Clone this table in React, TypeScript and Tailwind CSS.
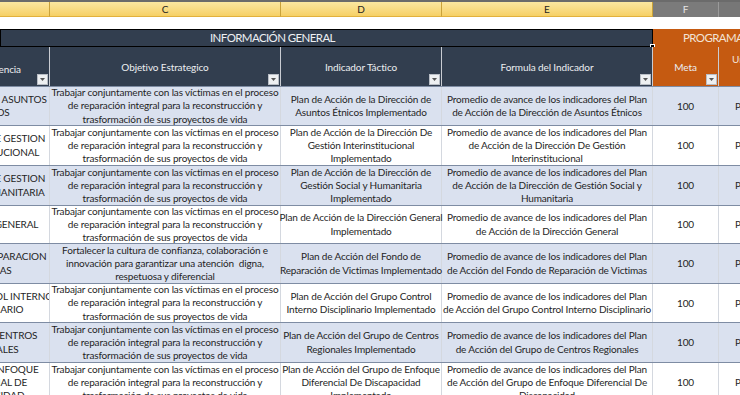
import React from 'react';

type Row = {
    dep: string[];
    obj: string[];
    ind: string[];
    form: string[];
    blue: boolean;
    h: string;
};

const OBJ = [
    'Trabajar conjuntamente con las víctimas en el proceso',
    'de reparación integral para la reconstrucción y',
    'trasformación de sus proyectos de vida',
];
const PROM = 'Promedio de avance de los indicadores del Plan';

const rows: Row[] = [
    {
        dep: ['DIRECCIÓN DE ASUNTOS', 'ÉTNICOS'],
        obj: OBJ,
        ind: ['Plan de Acción de la Dirección de', 'Asuntos Étnicos Implementado'],
        form: [PROM, 'de Acción de la Dirección de Asuntos Étnicos'],
        blue: true,
        h: 'h-[39px]',
    },
    {
        dep: ['DIRECCIÓN DE GESTION', 'INTERINSTITUCIONAL'],
        obj: OBJ,
        ind: ['Plan de Acción de la Dirección De', 'Gestión Interinstitucional', 'Implementado'],
        form: [PROM, 'de Acción de la Dirección De Gestión', 'Interinstitucional'],
        blue: false,
        h: 'h-[40px]',
    },
    {
        dep: ['DIRECCIÓN DE GESTION', 'SOCIAL Y HUMANITARIA'],
        obj: OBJ,
        ind: ['Plan de Acción de la Dirección de', 'Gestión Social y Humanitaria', 'Implementado'],
        form: [PROM, 'de Acción de la Dirección de Gestión Social y', 'Humanitaria'],
        blue: true,
        h: 'h-[40px]',
    },
    {
        dep: ['DIRECCIÓN GENERAL'],
        obj: OBJ,
        ind: ['Plan de Acción de la Dirección General', 'Implementado'],
        form: [PROM, 'de Acción de la Dirección General'],
        blue: false,
        h: 'h-[38px]',
    },
    {
        dep: ['FONDO DE REPARACION', 'VICTIMAS'],
        obj: [
            'Fortalecer la cultura de confianza, colaboración e',
            'innovación para garantizar una atención\u00a0 digna,',
            'respetuosa y diferencial',
        ],
        ind: ['Plan de Acción del Fondo de', 'Reparación de Victimas Implementado'],
        form: [PROM, 'de Acción del Fondo de Reparación de Victimas'],
        blue: true,
        h: 'h-[40px]',
    },
    {
        dep: ['GRUPO CONTROL INTERNO', 'DISCIPLINARIO'],
        obj: OBJ,
        ind: ['Plan de Acción del Grupo Control', 'Interno Disciplinario Implementado'],
        form: [PROM, 'de Acción del Grupo Control Interno Disciplinario'],
        blue: false,
        h: 'h-[39px]',
    },
    {
        dep: ['GRUPO DE CENTROS', 'REGIONALES'],
        obj: OBJ,
        ind: ['Plan de Acción del Grupo de Centros', 'Regionales Implementado'],
        form: [PROM, 'de Acción del Grupo de Centros Regionales'],
        blue: true,
        h: 'h-[40px]',
    },
    {
        dep: ['GRUPO DE ENFOQUE', 'DIFERENCIAL DE', 'DISCAPACIDAD'],
        obj: OBJ,
        ind: ['Plan de Acción del Grupo de Enfoque', 'Diferencial De Discapacidad', 'Implementado'],
        form: [PROM, 'de Acción del Grupo de Enfoque Diferencial De', 'Discapacidad'],
        blue: false,
        h: 'h-[40px]',
    },
];

const Lines = ({ lines }: { lines: string[] }) => (
    <div className="flex flex-col items-center leading-[13.3px]">
        {lines.map((l, i) => (
            <span key={i} className="whitespace-pre">
                {l}
            </span>
        ))}
    </div>
);

const Filter = () => (
    <div className="absolute right-[1px] bottom-[1px] w-[11px] h-[11px] bg-[#eef0f2] border border-[#b9bec6] flex items-center justify-center">
        <svg width="5" height="3" viewBox="0 0 5 3">
            <path d="M0 0h5L2.5 3z" fill="#555" />
        </svg>
    </div>
);

const HeadCell = ({ w, label, orange }: { w: string; label: string; orange?: boolean }) => (
    <div
        className={`relative ${w} shrink-0 h-full flex items-center justify-center border-r border-[#c9ccd2] ${
            orange ? 'bg-[#c55a11]' : 'bg-[#323e4f]'
        }`}
    >
        <span className="text-[10px] tracking-[-0.1px] text-[#eceef1] pt-[2px]">{label}</span>
        <Filter />
    </div>
);

export default function App() {
    return (
        <div
            className="w-[740px] h-[395px] overflow-hidden bg-white text-[#1f1f1f]"
            style={{ fontFamily: 'Lato, "Open Sans", sans-serif' }}
        >
            {/* column letters */}
            <div className="h-[17px] border-t-2 border-[#6b6b6b] flex text-[10px]">
                <div className="w-[50px] shrink-0 bg-gradient-to-b from-[#fbe7a0] to-[#f6d064] border-r border-[#c9a23a] border-b border-b-[#e2b13c]" />
                <div className="w-[231px] shrink-0 bg-gradient-to-b from-[#fbe7a0] to-[#f6d064] border-r border-[#c9a23a] border-b border-b-[#e2b13c] flex items-center justify-center">
                    C
                </div>
                <div className="w-[161px] shrink-0 bg-gradient-to-b from-[#fbe7a0] to-[#f6d064] border-r border-[#c9a23a] border-b border-b-[#e2b13c] flex items-center justify-center">
                    D
                </div>
                <div className="w-[211px] shrink-0 bg-gradient-to-b from-[#fbe7a0] to-[#f6d064] border-r border-[#c9a23a] border-b border-b-[#e2b13c] flex items-center justify-center">
                    E
                </div>
                <div className="w-[66px] shrink-0 bg-[#7b7b7b] border-r border-[#9a9a9a] text-[#e4e4e4] flex items-center justify-center">
                    F
                </div>
                <div className="flex-1 bg-[#777777]" />
            </div>

            {/* blank row */}
            <div className="h-[12px]" />

            {/* group header */}
            <div className="h-[18px] flex">
                <div className="relative w-[653px] shrink-0 bg-[#323e4f] border border-black flex items-center text-[11.5px] tracking-[-0.6px] text-[#eef0f3] pl-[209px]">
                    INFORMACIÓN GENERAL
                    <div className="absolute right-[-3px] bottom-[-3px] w-[5px] h-[5px] bg-black border border-white" />
                </div>
                <div className="flex-1 bg-[#c55a11] flex items-center text-[11.5px] tracking-[-0.6px] text-[#f3e3d6] pl-[30px] whitespace-nowrap">
                    PROGRAMACIÓN
                </div>
            </div>

            {/* column header */}
            <div className="h-[39px] flex">
                <div className="relative w-[50px] shrink-0 h-full bg-[#323e4f] border-r border-[#c9ccd2] overflow-hidden">
                    <span className="absolute right-[28px] top-[15px] text-[10px] tracking-[-0.1px] text-[#eceef1] whitespace-nowrap">
                        Dependencia
                    </span>
                    <Filter />
                </div>
                <HeadCell w="w-[231px]" label="Objetivo Estrategico" />
                <HeadCell w="w-[161px]" label="Indicador Táctico" />
                <HeadCell w="w-[211px]" label="Formula del Indicador" />
                <HeadCell w="w-[66px]" label="Meta" orange />
                <div className="flex-1 h-full bg-[#c55a11] text-[10px] text-[#f3e3d6] pl-[13px] pt-[5px] whitespace-nowrap">
                    Unidad de
                </div>
            </div>

            {/* data */}
            {rows.map((r, i) => (
                <div
                    key={i}
                    className={`${r.h} flex text-[10px] tracking-[-0.15px] border-t border-[#7e8ca3] ${
                        r.blue ? 'bg-[#dae1ef]' : 'bg-white'
                    }`}
                >
                    <div className="relative w-[50px] shrink-0 h-full border-r border-[#d4d8df] overflow-hidden">
                        <div className="absolute right-[3px] top-0 h-full w-[114px] flex items-center justify-center">
                            <Lines lines={r.dep} />
                        </div>
                    </div>
                    <div className="w-[231px] shrink-0 h-full border-r border-[#d4d8df] flex items-center justify-center">
                        <Lines lines={r.obj} />
                    </div>
                    <div className="w-[161px] shrink-0 h-full border-r border-[#d4d8df] flex items-center justify-center">
                        <Lines lines={r.ind} />
                    </div>
                    <div className="w-[211px] shrink-0 h-full border-r border-[#d4d8df] flex items-center justify-center">
                        <Lines lines={r.form} />
                    </div>
                    <div className="w-[66px] shrink-0 h-full border-r border-[#d4d8df] flex items-center justify-center">
                        100
                    </div>
                    <div className="flex-1 h-full flex items-center pl-[16px] whitespace-nowrap">Porcentaje</div>
                </div>
            ))}
        </div>
    );
}
